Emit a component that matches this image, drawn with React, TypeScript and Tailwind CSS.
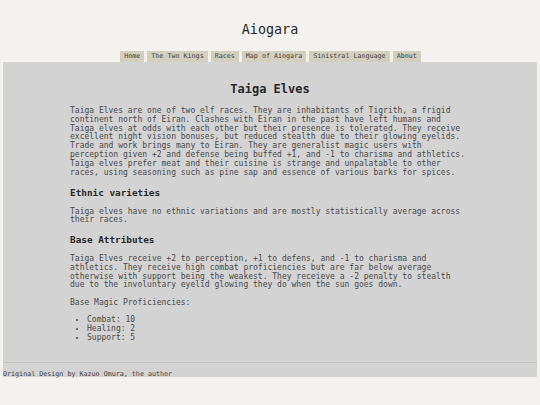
import React from "react";

const nav = ["Home", "The Two Kings", "Races", "Map of Aiogara", "Sinistral Language", "About"];

export default function App() {
  return (
    <div
      className="w-[540px] h-[405px] bg-[#f4f2ef] overflow-hidden"
      style={{ fontFamily: '"DejaVu Sans Mono", monospace' }}
    >
      <div className="h-[51px] flex flex-col items-center">
        <h1 className="mt-[22px] text-[13.4px] leading-[16px] text-[#262626] font-normal">Aiogara</h1>
      </div>
      <nav className="flex justify-center gap-[3px] h-[11px] pl-[1px]">
        {nav.map((n) => (
          <div
            key={n}
            className="bg-[#d3cfbf] px-[4px] text-[6.7px] leading-[11px] text-[#404040]"
          >
            {n}
          </div>
        ))}
      </nav>
      <div className="mx-[3px] bg-[#d3d3d3] h-[315px] flex flex-col">
        <div className="mx-auto w-[400px] flex flex-col text-[8px] leading-[8.8px] text-[#484848]">
          <h2 className="mt-[20px] h-[14px] text-center text-[12px] leading-[14px] font-bold text-[#262626]">Taiga Elves</h2>
          <p className="mt-[11px] pr-[4px]">
            Taiga Elves are one of two elf races. They are inhabitants of Tigrith, a frigid continent north of Eiran. Clashes with Eiran in the past have left humans and Taiga elves at odds with each other but their presence is tolerated. They receive excellent night vision bonuses, but reduced stealth due to their glowing eyelids. Trade and work brings many to Eiran. They are generalist magic users with perception given +2 and defense being buffed +1, and -1 to charisma and athletics. Taiga elves prefer meat and their cuisine is strange and unpalatable to other races, using seasoning such as pine sap and essence of various barks for spices.
          </p>
          <h3 className="mt-[9.5px] text-[9.36px] leading-[11px] font-bold text-[#262626]">Ethnic varieties</h3>
          <p className="mt-[9.7px] pr-[4px]">
            Taiga elves have no ethnic variations and are mostly statistically average across their races.
          </p>
          <h3 className="mt-[9.1px] text-[9.36px] leading-[11px] font-bold text-[#262626]">Base Attributes</h3>
          <p className="mt-[9.7px] pr-[4px]">
            Taiga Elves receive +2 to perception, +1 to defens, and -1 to charisma and athletics. They receive high combat proficiencies but are far below average otherwise with support being the weakest. They receieve a -2 penalty to stealth due to the involuntary eyelid glowing they do when the sun goes down.
          </p>
          <p className="mt-[8.6px]">Base Magic Proficiencies:</p>
          <ul className="mt-[8.5px] list-disc pl-[17px]">
            <li>Combat: 10</li>
            <li>Healing: 2</li>
            <li>Support: 5</li>
          </ul>
        </div>
        <div className="mt-auto border-t border-[#c3c3c3] h-[15px] pt-[7px] text-[6.7px] leading-[8px] text-[#404040]">
          Original Design by Kazuo Omura, the author
        </div>
      </div>
    </div>
  );
}
